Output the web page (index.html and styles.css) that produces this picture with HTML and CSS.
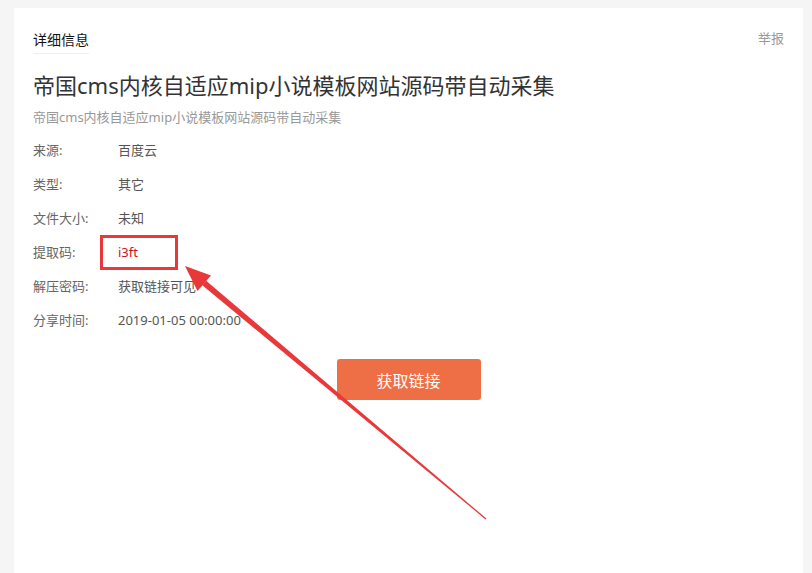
FILE: index.html
```html
<!DOCTYPE html>
<html lang="zh-CN">
  <head>
    <meta charset="UTF-8" />
    <meta name="viewport" content="width=device-width, initial-scale=1.0" />
    <title>详细信息</title>
    <link rel="stylesheet" href="styles.css">
  </head>
  <body>
    <div class="card">
      <div class="tabs">
        <span class="tab active">详细信息</span>
        <a class="report" href="#">举报</a>
      </div>

      <h1 class="title">帝国cms内核自适应mip小说模板网站源码带自动采集</h1>
      <p class="desc">帝国cms内核自适应mip小说模板网站源码带自动采集</p>

      <ul class="info">
        <li><span class="label">来源:</span><span class="value">百度云</span></li>
        <li><span class="label">类型:</span><span class="value">其它</span></li>
        <li><span class="label">文件大小:</span><span class="value">未知</span></li>
        <li><span class="label">提取码:</span><span class="value code">i3ft</span></li>
        <li><span class="label">解压密码:</span><span class="value">获取链接可见</span></li>
        <li><span class="label">分享时间:</span><span class="value">2019-01-05 00:00:00</span></li>
      </ul>

      <div class="actions">
        <button type="button" class="btn">获取链接</button>
      </div>
    </div>

    <!-- 标注: 红框 + 箭头 -->
    <svg class="markup" width="812" height="573" viewBox="0 0 812 573">
      <rect x="101.5" y="236.5" width="75" height="32" fill="none" stroke="#e8383a" stroke-width="3" />
      <polygon fill="#e8383a" points="202.3,285.3 206.1,280.7 486.4,518.6 485.6,519.4" />
      <polygon fill="#e8383a" points="185,266 211,275.5 197.5,291" />
    </svg>
  </body>
</html>
```

FILE: styles.css
```css
* {
  margin: 0;
  padding: 0;
  box-sizing: border-box;
  font-family: "Noto Sans", "Noto Sans CJK SC", sans-serif;
}
:root {
  --text-color: #333;
  --muted-color: #999;
  --label-color: #666;
  --accent-color: #ee6f45;
}
body {
  background: #f5f5f5;
  padding: 8px 9px 0 14px;
  min-height: 573px;
  position: relative;
  overflow: hidden;
}
.card {
  background: #fff;
  padding: 22px 19px 160px;
  min-height: 565px;
}
.tabs {
  display: flex;
  justify-content: space-between;
  align-items: flex-start;
}
.tab {
  font-size: 14px;
  line-height: 20px;
  color: #111;
  padding-bottom: 3px;
  border-bottom: 1px solid #efefef;
}
.report {
  font-size: 13px;
  line-height: 20px;
  color: var(--muted-color);
  text-decoration: none;
  margin-top: -2px;
}
.title {
  font-size: 22px;
  font-weight: 400;
  line-height: 30px;
  color: var(--text-color);
  margin-top: 16px;
}
.desc {
  font-size: 13px;
  line-height: 20px;
  color: var(--muted-color);
  margin-top: 7px;
}
.info {
  list-style: none;
  margin-top: 6px;
}
.info li {
  display: flex;
  font-size: 13px;
  line-height: 34px;
  height: 34px;
}
.label {
  width: 85px;
  color: var(--label-color);
}
.value {
  color: #555;
}
.value.code {
  color: #d0121b;
}
.actions {
  display: flex;
  justify-content: center;
  margin-top: 22px;
}
.btn {
  width: 144px;
  height: 41px;
  background: var(--accent-color);
  color: #fff;
  border: none;
  border-radius: 3px;
  font-size: 16px;
  cursor: pointer;
}
.markup {
  position: absolute;
  top: 0;
  left: 0;
  pointer-events: none;
}
```
